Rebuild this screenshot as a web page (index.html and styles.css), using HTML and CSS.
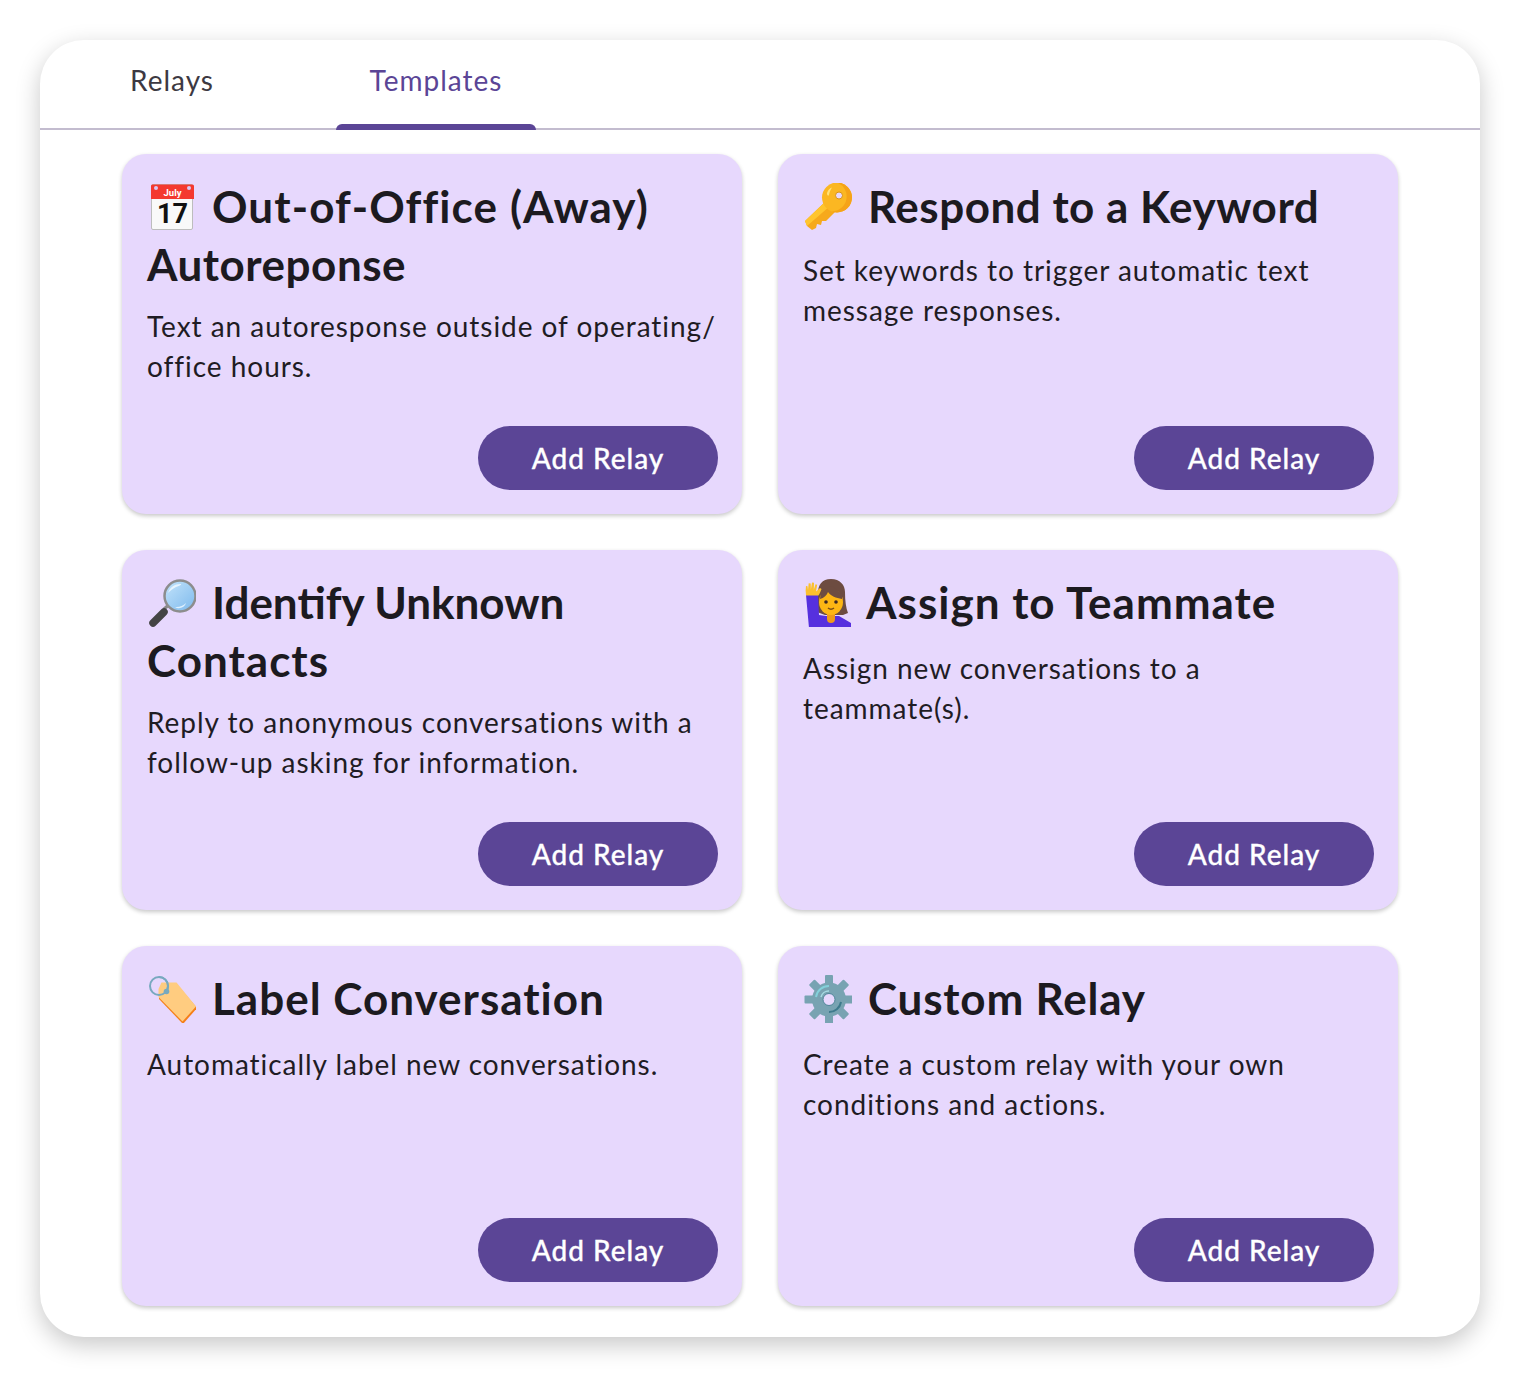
FILE: index.html
```html
<!DOCTYPE html>
<html lang="en">
<head>
<meta charset="utf-8">
<title>Relays</title>
<link rel="stylesheet" href="styles.css">
</head>
<body>
<main class="panel">
  <nav class="tabs">
    <a class="tab">Relays</a>
    <a class="tab tab-active">Templates</a>
  </nav>
  <section class="grid">
    <article class="card">
      <h2 class="title"><svg class="emoji" viewBox="0 0 48 48"><rect x="3.500" y="1.500" width="41" height="45" rx="1.500" fill="#f9f9f9" stroke="#bdbdbd"/><path d="M3 3A1.500 1.500 0 0 1 4.500 1.500h40A1.500 1.500 0 0 1 46 3v13H3z" fill="#f4392f"/><circle cx="8" cy="5" r="2" fill="#d9c8f2"/><circle cx="41" cy="5" r="2" fill="#d9c8f2"/><text x="24.500" y="13" class="cal-month">July</text><text x="24.500" y="40" class="cal-day">17</text></svg><span class="ls-11">Out-of-Office (Away)</span> <span class="ls-05">Autoreponse</span></h2>
      <p class="desc">Text an autoresponse outside of operating/ office hours.</p>
      <button class="add">Add Relay</button>
    </article>
    <article class="card">
      <h2 class="title title-one"><svg class="emoji" viewBox="0 0 48 48"><path d="M22 18 1 38l2 5 5 4 4-2 1-4 4 1 1-4 4 0 10-10z" fill="#f6a91c"/><path d="M22 18 1 38l2 5L26 23z" fill="#ffc52e"/><circle cx="33" cy="14.500" r="15" fill="#fbb722"/><path d="M33 -.5a15 15 0 0 1 0 30 15 15 0 0 1-5-1A15 15 0 0 0 33-.5z" fill="#f5a318"/><path d="M23 10c1-3 2.500-4.500 5-5.500-1.500 2.500-2.500 4-3 7.500-.3 1.500-2.500 0-2-2z" fill="#ffe27a"/><circle cx="35" cy="12.500" r="3.500" fill="#e7d8fd" stroke="#d99512"/></svg><span class="ls-05">Respond to a Keyword</span></h2>
      <p class="desc">Set keywords to trigger automatic text message responses.</p>
      <button class="add">Add Relay</button>
    </article>
    <article class="card">
      <h2 class="title"><svg class="emoji" viewBox="0 0 48 48"><defs><linearGradient id="lens" x1="0" y1="0" x2="1" y2="1"><stop offset="0" stop-color="#c4e4fb"/><stop offset="1" stop-color="#7db9ec"/></linearGradient></defs><path d="M16 30 23 24" stroke="#8a8a8a" stroke-width="3"/><path d="M5 44 16 33" stroke="#444" stroke-width="7.500" stroke-linecap="round"/><circle cx="32" cy="17" r="15.500" fill="url(#lens)" stroke="#8d8d8d" stroke-width="2.500"/><path d="M20 14c2-6 7-9 12-9 3 0 0 1.500-4 3-3 1.500-5 3-8 6z" fill="#e6f4fe"/><path d="M27 28c4 .5 8-1 11-4-1 4-7 7-11 4z" fill="#dff0fd"/></svg><span>Identify Unknown</span> <span class="ls-1">Contacts</span></h2>
      <p class="desc">Reply to anonymous conversations with a follow-up asking for information.</p>
      <button class="add">Add Relay</button>
    </article>
    <article class="card">
      <h2 class="title title-solo"><svg class="emoji emoji-tight" viewBox="0 0 48 48"><path d="M27 0c-9 0-13 6-13 14 0 7 0 15-1 19l8 3h18l5-2c-2-5-3-12-3-21C41 6 36 0 27 0z" fill="#6d4c41"/><path d="M2 16h12l1 20 7 1h13l12 7v5H5z" fill="#5630de"/><path d="M23 35h8v5a4 4 0 0 1-8 0z" fill="#ef9a1a"/><ellipse cx="27" cy="23" rx="12" ry="13" fill="#fdb614"/><path d="M16 20c4-1 7-4 8-7 3 4 8 6 14 7v-5L28 7l-11 5z" fill="#6d4c41"/><circle cx="22" cy="23" r="1.800" fill="#3e2723"/><circle cx="32" cy="23" r="1.800" fill="#3e2723"/><path d="M24 29q3 2.500 6 0" stroke="#7a4a12" stroke-width="1.500" fill="none"/><path d="M2 16c-.5-3-.5-6 0-9l1.500.2.500 4 .7-7 2 .2.200 6 1.100-7 2 .3-.200 7 1.700-5.500 1.700.6-1.200 6.700L16 9l1.500 1c-1 3-2 5-3 6.500H2z" fill="#fbc02d"/></svg><span class="ls-1">Assign to Teammate</span></h2>
      <p class="desc">Assign new conversations to a teammate(s).</p>
      <button class="add">Add Relay</button>
    </article>
    <article class="card">
      <h2 class="title title-solo"><svg class="emoji" viewBox="0 0 48 48"><path d="M14 9h14.500L49 33 35 49 11 24v-9z" fill="#f57f17"/><path d="M13.500 7.500h15L48 31.500 34.500 46.500 10.500 22v-8z" fill="#ffcc80"/><circle cx="11" cy="11" r="9" fill="none" stroke="#78a9bf" stroke-width="2"/><circle cx="18.500" cy="16.500" r="2.800" fill="#78a9bf"/><path d="M11 2c5 0 9 4 9 9 0 3-.5 4-1.500 5.500" fill="none" stroke="#78a9bf" stroke-width="2"/></svg><span class="ls-1">Label Conversation</span></h2>
      <p class="desc">Automatically label new conversations.</p>
      <button class="add">Add Relay</button>
    </article>
    <article class="card">
      <h2 class="title title-solo"><svg class="emoji" viewBox="0 0 48 48"><g fill="#78a3b2"><rect x="21" y="0" width="8" height="49" rx="1"/><rect x="21" y="0" width="8" height="49" rx="1" transform="rotate(45 25 24.500)"/><rect x="21" y="0" width="8" height="49" rx="1" transform="rotate(90 25 24.500)"/><rect x="21" y="0" width="8" height="49" rx="1" transform="rotate(135 25 24.500)"/><circle cx="25" cy="24.500" r="17"/></g><path d="M12 22a13 13 0 0 1 13-11" fill="none" stroke="#83d0da" stroke-width="2"/><path d="M17 22a8 8 0 0 1 8-6" fill="none" stroke="#a7dce3" stroke-width="1.500"/><path d="M37 27a12 12 0 0 1-12 10" fill="none" stroke="#3e7a8c" stroke-width="2"/><circle cx="25" cy="24.500" r="6" fill="#e7d8fd" stroke="#4f8698" stroke-width="1"/></svg><span class="ls-08">Custom Relay</span></h2>
      <p class="desc">Create a custom relay with your own conditions and actions.</p>
      <button class="add">Add Relay</button>
    </article>
  </section>
</main>
</body>
</html>
```

FILE: styles.css
```css
* { box-sizing: border-box; }

body {
  margin: 0;
  background: #fff;
  font-family: "Lato", "Liberation Sans", sans-serif;
}

.panel {
  margin: 40px;
  height: 1297px;
  background: #fff;
  border-radius: 44px;
  box-shadow: 0 8px 24px rgba(0, 0, 0, 0.22);
  overflow: hidden;
}

.tabs {
  display: flex;
  gap: 64px;
  height: 90px;
  padding-left: 32px;
  border-bottom: 2px solid #c3bccf;
}

.tab {
  position: relative;
  width: 200px;
  padding-top: 21px;
  text-align: center;
  font-size: 28px;
  line-height: 38px;
  letter-spacing: 1px;
  color: #3d3942;
}

.tab-active { color: #5b4596; }

.tab-active::after {
  content: "";
  position: absolute;
  left: 0;
  right: 0;
  bottom: -2px;
  height: 6px;
  background: #5b4596;
  border-radius: 6px 6px 0 0;
}

.grid {
  display: grid;
  grid-template-columns: 620px 620px;
  grid-auto-rows: 360px;
  gap: 36px;
  justify-content: center;
  padding-top: 24px;
}

.card {
  display: flex;
  flex-direction: column;
  padding: 23px 24px 24px 25px;
  background: #e7d8fd;
  border-radius: 24px;
  box-shadow: 0 2px 4px rgba(0, 0, 0, 0.22);
}

.title {
  margin: 0 0 13px;
  font-size: 44px;
  line-height: 58px;
  font-weight: 700;
  color: #1c1a20;
}

.title-one { margin-bottom: 15px; }
.title-solo { margin-bottom: 17px; }

.ls-05 { letter-spacing: 0.5px; }
.ls-08 { letter-spacing: 0.8px; }
.ls-1 { letter-spacing: 1px; }
.ls-11 { letter-spacing: 1.1px; }

.emoji {
  display: inline-block;
  width: 48px;
  height: 48px;
  margin: 0 16px 0 1px;
  vertical-align: -8px;
}

.emoji-tight { margin-right: 14px; }

.cal-month {
  font: 700 9.500px "Roboto", sans-serif;
  fill: #fff;
  text-anchor: middle;
}

.cal-day {
  font: 700 27px "Roboto", sans-serif;
  fill: #111;
  text-anchor: middle;
}

.desc {
  margin: 0;
  font-size: 28px;
  line-height: 40px;
  letter-spacing: 0.96px;
  color: #1f1c24;
}

.add {
  align-self: flex-end;
  width: 240px;
  height: 64px;
  margin-top: auto;
  border: 0;
  border-radius: 32px;
  background: #5b4596;
  color: #fff;
  font: 500 28px "Lato", sans-serif;
  letter-spacing: 1px;
  -webkit-text-stroke: 0.3px #fff;
}
```
